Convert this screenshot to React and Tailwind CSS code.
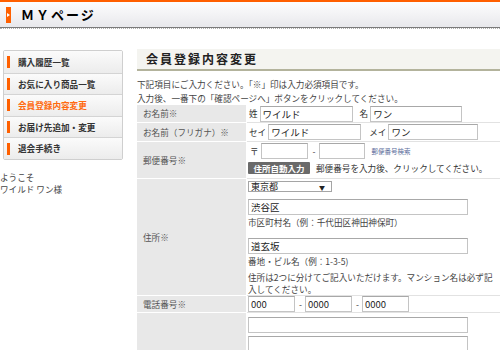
import React from "react";

const menu = [
  { t: "購入履歴一覧" },
  { t: "お気に入り商品一覧" },
  { t: "会員登録内容変更", active: true },
  { t: "お届け先追加・変更" },
  { t: "退会手続き" },
];

function Field({ w, v = "", className = "" }) {
  return (
    <div
      className={`h-[16px] border border-[#c4c4c4] border-t-[#a8a8a8] bg-white px-[2px] text-[9.5px] leading-[14px] text-[#222] ${className}`}
      style={{ width: w }}
    >
      {v}
    </div>
  );
}

function Row({ label, h, children }) {
  return (
    <div className="flex" style={{ height: h }}>
      <div className="flex w-[110px] shrink-0 items-center border-b border-r border-white bg-[#e8e8e8] pl-[6px] text-[#555]">
        {label}
      </div>
      <div className="flex flex-1 border-b border-[#e2e2e2] pl-[1px]">{children}</div>
    </div>
  );
}

export default function App() {
  return (
    <div className="h-[350px] w-[500px] overflow-hidden bg-white font-['Noto_Sans_CJK_JP',sans-serif] text-[8.6px] leading-none text-[#333]">
      {/* header */}
      <div className="h-[2px] bg-[#ff5f00]" />
      <div className="flex h-[25px] items-center bg-gradient-to-b from-[#fdfdfe] to-[#e8e8ec] pl-[6px]">
        <div className="flex h-[16px] w-[5px] items-center justify-center bg-[#ff6000]">
          <div className="h-0 w-0 border-y-[2px] border-l-[3px] border-y-transparent border-l-white" />
        </div>
        <div className="ml-[10px] text-[13px] font-bold tracking-[2px] text-black">ＭＹページ</div>
      </div>
      <div className="h-[1px] bg-[#7a7a7a]" />
      <div className="h-[1px] border-b border-dotted border-[#b0b0b0]" />

      <div className="flex">
        {/* sidebar */}
        <div className="w-[124px] shrink-0">
          <div className="ml-[3px] mt-[21px] w-[120px] overflow-hidden rounded-[2px] border border-[#cfcfcf]">
            {menu.map((m, i) => (
              <div
                key={i}
                className={`flex h-[21.6px] items-center bg-gradient-to-b from-[#fbfbfb] to-[#ececec] ${i ? "border-t border-[#d4d4d4]" : ""}`}
              >
                <div className="ml-[3px] h-[12px] w-[3px] bg-[#ff6000]" />
                <div className={`ml-[8px] font-bold ${m.active ? "text-[#ff6a10]" : "text-[#333]"}`}>{m.t}</div>
              </div>
            ))}
          </div>
          <div className="mt-[11px] leading-[12px] text-[#444]">
            <div>ようこそ</div>
            <div>ワイルド ワン様</div>
          </div>
        </div>

        {/* main */}
        <div className="ml-[13px] flex-1">
          <div className="mt-[20px] flex h-[22px] items-center border-b-2 border-[#b3b39c] bg-[#f4f4f0] pl-[9px] text-[12px] font-bold tracking-[2px] text-[#222]">
            会員登録内容変更
          </div>
          <div className="mt-[6px] leading-[14px] text-[#444]">
            <div>下記項目にご入力ください。「※」印は入力必須項目です。</div>
            <div>入力後、一番下の「確認ページへ」ボタンをクリックしてください。</div>
          </div>

          <div className="mt-[0px]">
            <Row label="お名前※" h={18}>
              <div className="flex items-center">
                <span className="ml-[1px]">姓</span>
                <Field w={93} v="ワイルド" className="ml-[2px]" />
                <span className="ml-[7px]">名</span>
                <Field w={92} v="ワン" className="ml-[2px]" />
              </div>
            </Row>
            <Row label="お名前（フリガナ）※" h={19}>
              <div className="flex items-center">
                <span className="ml-[1px]">セイ</span>
                <Field w={93} v="ワイルド" className="ml-[2px]" />
                <span className="ml-[8px]">メイ</span>
                <Field w={90} v="ワン" className="ml-[2px]" />
              </div>
            </Row>
            <Row label="郵便番号※" h={37}>
              <div className="flex flex-col pt-[1px]">
                <div className="flex h-[16px] items-center">
                  <span className="ml-[2px]">〒</span>
                  <Field w={47} className="ml-[2px]" />
                  <span className="ml-[5px]">-</span>
                  <Field w={46} className="ml-[3px]" />
                  <span className="ml-[7px] text-[6.5px] text-[#5a6c9a]">郵便番号検索</span>
                </div>
                <div className="mt-[3px] flex items-center">
                  <div className="flex h-[12px] w-[62px] items-center justify-center rounded-[1px] bg-[#6a6a6a] text-[8.5px] font-bold text-white">
                    住所自動入力
                  </div>
                  <span className="ml-[6px]">郵便番号を入力後、クリックしてください。</span>
                </div>
              </div>
            </Row>
            <Row label="住所※" h={117}>
              <div className="flex flex-col pt-[2px]">
                <div className="relative flex h-[14px] w-[84px] items-center border border-[#a5a5a5] bg-white pl-[2px] text-[9px] text-[#222]">
                  東京都
                  <span className="absolute right-[6px] top-[3px] text-[6px]">▼</span>
                </div>
                <Field w={220} v="渋谷区" className="mt-[7px]" />
                <div className="mt-[3px] text-[#444]">市区町村名（例：千代田区神田神保町）</div>
                <Field w={220} v="道玄坂" className="mt-[11px]" />
                <div className="mt-[3px] text-[#444]">番地・ビル名（例：1-3-5)</div>
                <div className="mt-[6px] whitespace-nowrap leading-[12px] text-[#444]">
                  住所は2つに分けてご記入いただけます。マンション名は必ず記
                  <br />
                  入してください。
                </div>
              </div>
            </Row>
            <Row label="電話番号※" h={17}>
              <div className="flex items-center">
                <Field w={47} v="000" />
                <span className="ml-[4px]">-</span>
                <Field w={47} v="0000" className="ml-[3px]" />
                <span className="ml-[4px]">-</span>
                <Field w={47} v="0000" className="ml-[3px]" />
              </div>
            </Row>
            <Row label="" h={60}>
              <div className="flex flex-col pt-[4px]">
                <Field w={220} />
                <Field w={220} className="mt-[3px]" />
              </div>
            </Row>
          </div>
        </div>
      </div>
    </div>
  );
}
